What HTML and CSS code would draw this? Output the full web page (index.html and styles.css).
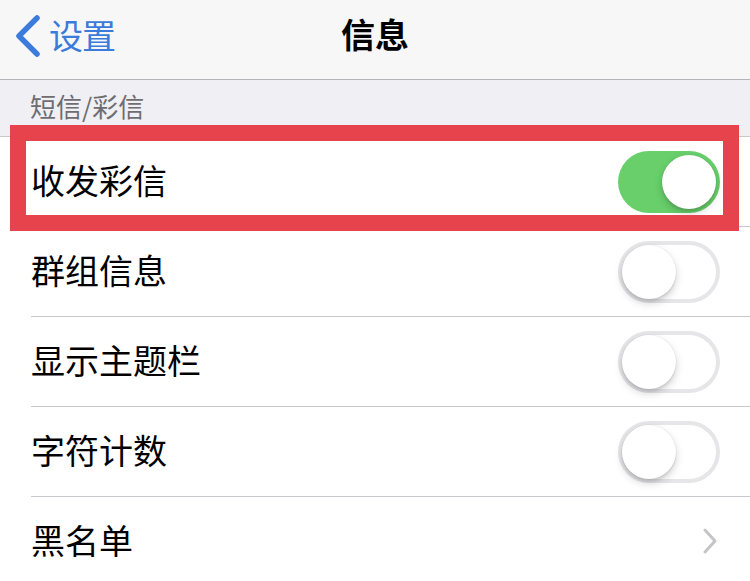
FILE: index.html
```html
<!DOCTYPE html>
<html lang="zh-CN">
<head>
<meta charset="utf-8">
<link rel="stylesheet" href="styles.css">
</head>
<body>
<div class="page">
  <header class="nav">
    <div class="back">
      <svg class="back-icon" width="30" height="46" viewBox="0 0 30 46"><polyline points="24,4 6,22 24,40" fill="none" stroke="#3a7bdb" stroke-width="5.5" stroke-linecap="round" stroke-linejoin="round"/></svg>
      <span class="back-label">设置</span>
    </div>
    <div class="title">信息</div>
  </header>
  <div class="section-header">短信/彩信</div>
  <ul class="group">
    <li class="row"><span class="label">收发彩信</span><span class="switch on"><span class="knob"></span></span></li>
    <li class="row"><span class="label">群组信息</span><span class="switch"><span class="knob"></span></span></li>
    <li class="row"><span class="label">显示主题栏</span><span class="switch"><span class="knob"></span></span></li>
    <li class="row"><span class="label">字符计数</span><span class="switch"><span class="knob"></span></span></li>
    <li class="row"><span class="label">黑名单</span><svg class="chevron" width="16" height="28" viewBox="0 0 16 28"><polyline points="3,3 13,14 3,25" fill="none" stroke="#c4c4c9" stroke-width="3" stroke-linecap="round" stroke-linejoin="round"/></svg></li>
  </ul>
  <div class="highlight"></div>
</div>
</body>
</html>
```

FILE: styles.css
```css
* { box-sizing: border-box; }
html, body { margin: 0; padding: 0; }
body {
  width: 750px;
  height: 581px;
  overflow: hidden;
  background: #ffffff;
  font-family: "Noto Sans CJK SC", "Noto Sans", sans-serif;
}
.page { position: relative; width: 750px; }
.nav {
  position: relative;
  height: 80px;
  background: #f7f7f8;
  border-bottom: 1px solid #b4b4b8;
  display: flex;
  align-items: center;
  padding-bottom: 10px;
}
.back {
  display: flex;
  align-items: center;
  padding-left: 13px;
  gap: 6px;
  color: #3a7bdb;
  font-size: 34px;
  line-height: 1;
}
.back-icon { display: block; margin-top: 4px; }
.back-label { letter-spacing: -1px; }
.title {
  position: absolute;
  left: 0; right: 0;
  top: 0; bottom: 12px;
  display: flex;
  align-items: center;
  justify-content: center;
  font-size: 34px;
  font-weight: 700;
  color: #000;
  pointer-events: none;
}
.section-header {
  height: 56px;
  background: #efeff4;
  color: #6d6d72;
  font-size: 26px;
  line-height: 1;
  display: flex;
  align-items: center;
  padding-left: 30px;
  padding-bottom: 4px;
}
.group {
  list-style: none;
  margin: 0;
  padding: 0;
  border-top: 1px solid #c8c7cc;
  background: #fff;
}
.row {
  height: 90px;
  display: flex;
  align-items: center;
  justify-content: space-between;
  padding: 0 30px 0 0;
  border-bottom: 1px solid #c8c7cc;
  margin-left: 31px;
}
.row:last-child { border-bottom: none; padding-right: 32px; }
.label {
  font-size: 34px;
  color: #000;
  line-height: 1;
  margin-top: -4px;
}
.switch {
  position: relative;
  width: 102px;
  height: 62px;
  border-radius: 31px;
  background: #fff;
  box-shadow: inset 0 0 0 4px #e6e6e9;
  flex: none;
}
.switch .knob {
  position: absolute;
  top: 4px;
  left: 4px;
  width: 54px;
  height: 54px;
  border-radius: 50%;
  background: #fff;
  box-shadow: 0 4px 9px rgba(0,0,0,0.18), 0 3px 2px rgba(0,0,0,0.06), 0 0 0 0.5px rgba(0,0,0,0.06);
}
.switch.on {
  background: #68cf6b;
  box-shadow: none;
}
.switch.on .knob { left: 44px; }
.chevron { display: block; margin-top: -2px; }
.highlight {
  position: absolute;
  left: 10px;
  top: 125px;
  width: 729px;
  height: 106px;
  border: 16px solid #e6434d;
  pointer-events: none;
}
```
